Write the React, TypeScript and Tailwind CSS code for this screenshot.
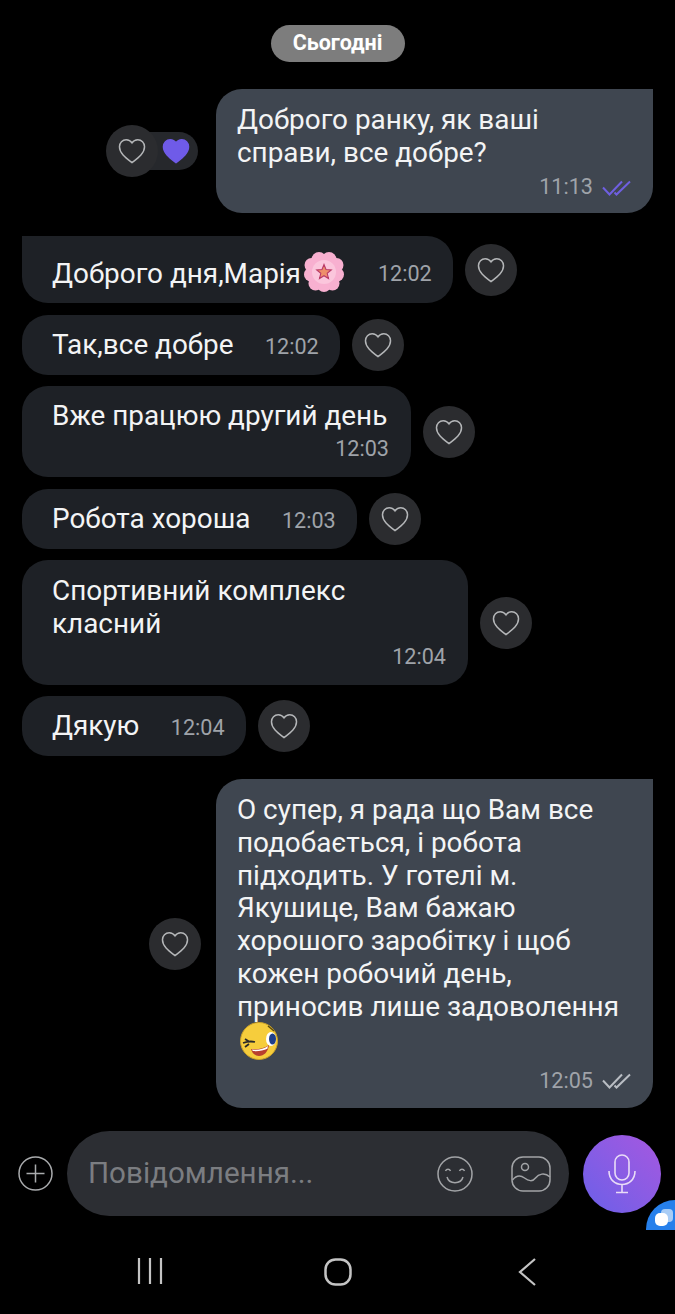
import React from "react"

function Heart({ filled = false }: { filled?: boolean }) {
  return (
    <svg width="28" height="26" viewBox="0 0 30 28" fill={filled ? "#6f5be8" : "none"} stroke={filled ? "#6f5be8" : "#b4b6b8"} strokeWidth="1.6">
      <path d="M15 26.500C9 21.800 1.500 16.600 1.500 9.400 1.500 5 4.800 1.800 8.800 1.800c2.600 0 4.800 1.300 6.200 3.500 1.400-2.200 3.600-3.500 6.200-3.500 4 0 7.300 3.200 7.300 7.600 0 7.200-7.500 12.400-13.500 17.100z" />
    </svg>
  )
}

function HeartButton() {
  return (
    <div className="w-[52px] h-[52px] rounded-full bg-[#2b2c2f] flex items-center justify-center shrink-0">
      <Heart />
    </div>
  )
}

function Ticks({ color }: { color: string }) {
  return (
    <svg width="29" height="16" viewBox="0 0 29 16" fill="none" stroke={color} strokeWidth="2" className="ml-[9px]">
      <path d="M1 7.500l6.500 7L20 1.500" />
      <path d="M12.500 12.500l2 2L28 1.500" />
    </svg>
  )
}

function Flower() {
  return (
    <svg width="42" height="42" viewBox="0 0 42 42" className="shrink-0 ml-[2px] mb-[-3px]">
      <g fill="#f8b0d0">
        <circle cx="16" cy="8.500" r="7.500" />
        <circle cx="26" cy="8.500" r="7.500" />
        <circle cx="33.500" cy="14" r="7" />
        <circle cx="34" cy="23.500" r="7" />
        <circle cx="29.500" cy="32.500" r="7" />
        <circle cx="21" cy="34" r="7" />
        <circle cx="12.500" cy="32.500" r="7" />
        <circle cx="8" cy="23.500" r="7" />
        <circle cx="8.500" cy="14" r="7" />
      </g>
      <circle cx="21" cy="21" r="12" fill="#fbc6dc" />
      <path d="M21 13.500l2 5 5.300.4-4.100 3.400 1.300 5.200-4.500-2.800-4.500 2.800 1.300-5.200-4.100-3.400 5.300-.4z" fill="#ee8f6a" stroke="#b93a68" strokeWidth="1.100" />
    </svg>
  )
}

function Wink() {
  return (
    <svg width="40" height="38" viewBox="0 0 40 38" className="block ml-[2px] mt-[-2px]">
      <circle cx="20" cy="19" r="18.500" fill="#f6cd3c" stroke="#c9a02a" strokeWidth="1" />
      <path d="M4 21c4-1.500 8-2 12-1M6 17l4 2.500M6 25l4-3" fill="none" stroke="#2a2a2a" strokeWidth="1.800" />
      <path d="M29 4l6 5" fill="none" stroke="#5a4a10" strokeWidth="1.500" />
      <ellipse cx="32" cy="17" rx="5" ry="7" fill="#fff" />
      <ellipse cx="33.500" cy="17" rx="3.500" ry="5.500" fill="#1f3f8a" />
      <path d="M12 27c6 1 12 0 18-4-1 7-5 11-10 11-4 0-7-3-8-7z" fill="#b8402e" />
      <path d="M13 27.500c6 .8 11-.2 16-3.400l-.6 2.600c-4 2-9 2.800-14.600 2.400z" fill="#fff" />
    </svg>
  )
}

function Incoming({ text, time }: { text: string; time: string }) {
  return (
    <div className="flex items-center gap-[12px] pl-[22px]">
      <div className="rounded-[26px] bg-[#1e2126] pl-[30px] pr-[21px] pt-[13px] pb-[14px] flex gap-[31.5px]">
        <span className="text-[27.9px] leading-[33px] text-[#f3f4f5] whitespace-nowrap">{text}</span>
        <span className="text-[21.6px] leading-[37px] h-[33px] text-[#9fa3a9]">{time}</span>
      </div>
      <HeartButton />
    </div>
  )
}

function IncomingLong({ lines, time, box }: { lines: string[]; time: string; box: string }) {
  return (
    <div className="flex items-center gap-[12px] pl-[22px]">
      <div className={`rounded-[26px] bg-[#1e2126] pl-[30px] pr-[22px] ${box}`}>
        {lines.map((l) => (
          <p key={l} className="text-[27.9px] leading-[33px] text-[#f3f4f5] whitespace-nowrap">{l}</p>
        ))}
        <p className="text-[21.6px] leading-[33px] text-[#9fa3a9] text-right">{time}</p>
      </div>
      <HeartButton />
    </div>
  )
}

export default function App() {
  return (
    <div className="relative w-[675px] h-[1314px] bg-black overflow-hidden font-['Roboto',sans-serif]">
      <div className="flex justify-center pt-[25px]">
        <span className="h-[37px] w-[134px] rounded-full bg-[#7d7d7d] text-white text-[21.5px] font-bold flex items-center justify-center">
          Сьогодні
        </span>
      </div>

      {/* first sent message */}
      <div className="mt-[27px] flex items-center justify-end gap-[18px] pr-[22px]">
        <div className="flex items-center">
          <div className="relative z-10">
            <HeartButton />
          </div>
          <div className="ml-[-26px] w-[66px] h-[38px] rounded-r-full bg-[#26282c] flex items-center justify-end pr-[8px]">
            <Heart filled />
          </div>
        </div>
        <div className="w-[437px] h-[124px] rounded-[26px] rounded-tr-none bg-[#3f4650] pl-[21px] pr-[22px] pt-[14px]">
          <p className="text-[27.9px] leading-[33px] text-[#f3f4f5]">
            Доброго ранку, як ваші<br />справи, все добре?
          </p>
          <div className="flex items-center justify-end h-[37px] text-[21.6px] text-[#9fa3a9]">
            11:13
            <Ticks color="#6f5fe0" />
          </div>
        </div>
      </div>

      <div className="mt-[23px] flex items-center gap-[12px] pl-[22px]">
        <div className="rounded-[26px] rounded-tl-none bg-[#1e2126] pl-[30px] pr-[21px] pt-[15px] pb-[13px] flex items-end">
          <span className="text-[27.9px] leading-[33px] text-[#f3f4f5] whitespace-nowrap">Доброго дня,Марія</span>
          <Flower />
          <span className="ml-[33px] text-[21.6px] leading-[32px] text-[#9fa3a9]">12:02</span>
        </div>
        <HeartButton />
      </div>

      <div className="mt-[12px]"><Incoming text="Так,все добре" time="12:02" /></div>
      <div className="mt-[11px]"><IncomingLong lines={["Вже працюю другий день"]} time="12:03" box="w-[389px] pt-[13px] pb-[12px]" /></div>
      <div className="mt-[12px]"><Incoming text="Робота хороша" time="12:03" /></div>
      <div className="mt-[11px]"><IncomingLong lines={["Спортивний комплекс", "класний"]} time="12:04" box="w-[446px] pt-[14px] pb-[12px]" /></div>
      <div className="mt-[11px]"><Incoming text="Дякую" time="12:04" /></div>

      {/* long sent message */}
      <div className="mt-[23px] flex items-center justify-end gap-[15px] pr-[22px]">
        <HeartButton />
        <div className="w-[437px] h-[329px] rounded-[26px] rounded-tr-none bg-[#3f4650] pl-[21px] pr-[22px] pt-[15px]">
          <p className="text-[27.9px] leading-[32.8px] text-[#f3f4f5] whitespace-nowrap">
            О супер, я рада що Вам все<br />
            подобається, і робота<br />
            підходить. У готелі м.<br />
            Якушице, Вам бажаю<br />
            хорошого заробітку і щоб<br />
            кожен робочий день,<br />
            приносив лише задоволення
          </p>
          <Wink />
          <div className="mt-[5px] flex items-center justify-end h-[33px] text-[21.6px] text-[#9fa3a9]">
            12:05
            <Ticks color="#b9bdc3" />
          </div>
        </div>
      </div>

      {/* input bar */}
      <div className="mt-[23px] flex items-center pl-[18px]">
        <svg width="35" height="35" viewBox="0 0 35 35" fill="none" stroke="#a9abad" strokeWidth="1.500" className="shrink-0">
          <circle cx="17.500" cy="17.500" r="16.500" />
          <path d="M17.500 8.500v18M8.500 17.500h18" />
        </svg>
        <div className="ml-[14px] w-[502px] h-[85px] rounded-full bg-[#2c2e33] flex items-center pl-[21px]">
          <span className="text-[29.6px] text-[#7b7d81] w-[349px] whitespace-nowrap">Повідомлення...</span>
          <svg width="36" height="36" viewBox="0 0 36 36" fill="none" stroke="#a2a4a7" strokeWidth="1.500">
            <circle cx="18" cy="18" r="17" />
            <path d="M8.500 15c1-2.500 4-2.500 5 0M22.500 15c1-2.500 4-2.500 5 0" />
            <path d="M10 21c2 7.500 14 7.500 16 0" />
          </svg>
          <svg width="40" height="36" viewBox="0 0 40 36" fill="none" stroke="#a2a4a7" strokeWidth="1.500" className="ml-[38px]">
            <rect x="1" y="1" width="38" height="34" rx="11" />
            <circle cx="14" cy="11" r="3.500" />
            <path d="M1.500 24c4-5 8-5 12-2s8 4 11 0 9-6 14.500-1" />
          </svg>
        </div>
        <div className="ml-[14px] w-[78px] h-[78px] rounded-full bg-gradient-to-tr from-[#6a5fe8] to-[#a557e0] flex items-center justify-center shrink-0">
          <svg width="30" height="40" viewBox="0 0 30 40" fill="none" stroke="#e9dcf7" strokeWidth="1.600">
            <rect x="8" y="1" width="14" height="25" rx="7" />
            <path d="M2 17c0 18 26 18 26 0M15 31v7M9 38.500h12" />
          </svg>
        </div>
      </div>

      {/* floating chat badge */}
      <div className="absolute left-[646px] top-[1200px] w-[29px] h-[30px] overflow-hidden">
        <div className="w-[58px] h-[60px] rounded-full bg-[#2680eb] relative">
          <div className="absolute left-[15px] top-[9px] w-[12px] h-[13px] rounded-[4px] bg-[#a9cdf6]" />
          <div className="absolute left-[9px] top-[13px] w-[13px] h-[13px] rounded-[5px] bg-white" />
        </div>
      </div>

      {/* android nav */}
      <div className="mt-[42px] ml-[55px] flex">
        <div className="w-[189px] flex justify-center">
          <svg width="26" height="26" viewBox="0 0 26 26" stroke="#c4c4c4" strokeWidth="2.200">
            <path d="M2 0v26M13 0v26M24 0v26" />
          </svg>
        </div>
        <div className="w-[188px] flex justify-center">
          <svg width="28" height="28" viewBox="0 0 28 28" fill="none" stroke="#c4c4c4" strokeWidth="2.500">
            <rect x="1.500" y="1.500" width="25" height="25" rx="10" />
          </svg>
        </div>
        <div className="w-[189px] flex justify-center">
          <svg width="18" height="28" viewBox="0 0 18 28" fill="none" stroke="#c4c4c4" strokeWidth="2.200">
            <path d="M17 1L2 14l15 13" />
          </svg>
        </div>
      </div>
    </div>
  )
}
